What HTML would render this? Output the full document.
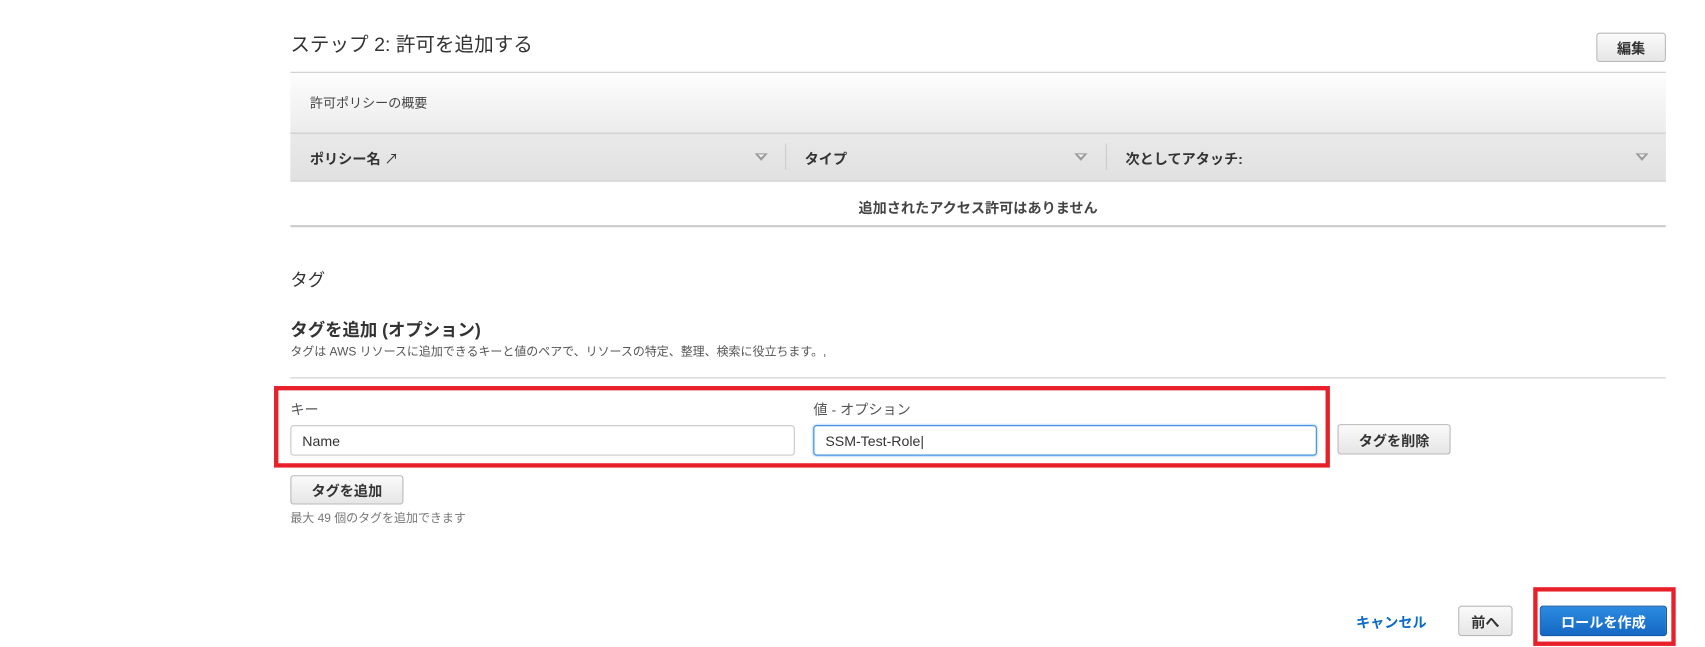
<!DOCTYPE html>
<html><head><meta charset="utf-8"><style>
*{box-sizing:border-box;margin:0;padding:0}
body{width:1705px;height:647px;background:#fff;position:relative;font-family:"Liberation Sans","Noto Sans CJK JP",sans-serif;color:#333;overflow:hidden}
#w{position:absolute;left:0;top:0;width:1568px;height:595px;transform:scale(1.0874);transform-origin:0 0}
.a{position:absolute}
.btn{position:absolute;border:1px solid #b8b8b8;border-radius:3px;background:linear-gradient(#fafafa,#e6e6e6);font-size:13px;font-weight:bold;color:#333;display:flex;align-items:center;justify-content:center}
.inp{position:absolute;border:1px solid #c8c8c8;border-radius:3px;background:#fff;font-size:13px;padding-left:10px;display:flex;align-items:center;color:#333}
.tri{position:absolute;width:0;height:0;border-left:6px solid transparent;border-right:6px solid transparent;border-top:7px solid #999}
.tri::after{content:"";position:absolute;left:-3px;top:-6px;border-left:3px solid transparent;border-right:3px solid transparent;border-top:3px solid #eee}
.sep{position:absolute;width:1px;height:24px;background:#ccc;top:132px}
</style></head><body><div id="w">
<div class="a" style="left:267px;top:27px;font-size:18px;color:#333">ステップ 2: 許可を追加する</div>
<div class="btn" style="left:1468px;top:30px;width:64px;height:27px">編集</div>
<div class="a" style="left:267px;top:66px;width:1265px;height:100px;border-top:1px solid #ccc;background:linear-gradient(#fdfdfd,#ececec 55%,#e9e9e9 56%,#e1e1e1)"></div>
<div class="a" style="left:267px;top:122px;width:1265px;height:1px;background:#ccc"></div>
<div class="a" style="left:267px;top:166px;width:1265px;height:1px;background:#ccc"></div>
<div class="a" style="left:285px;top:86px;font-size:12px;color:#444">許可ポリシーの概要</div>
<div class="a" style="left:285px;top:136px;font-size:13px;font-weight:bold;color:#333">ポリシー名 <span style="font-weight:normal">↗</span></div>
<div class="a" style="left:740px;top:136px;font-size:13px;font-weight:bold">タイプ</div>
<div class="a" style="left:1035px;top:136px;font-size:13px;font-weight:bold">次としてアタッチ:</div>
<div class="tri" style="left:694px;top:141px"></div>
<div class="tri" style="left:988px;top:141px"></div>
<div class="tri" style="left:1504px;top:141px"></div>
<div class="sep" style="left:722px"></div>
<div class="sep" style="left:1017px"></div>
<div class="a" style="left:267px;top:181px;width:1265px;text-align:center;font-size:13px;font-weight:bold;color:#444">追加されたアクセス許可はありません</div>
<div class="a" style="left:267px;top:207px;width:1265px;height:2px;background:#ccc"></div>
<div class="a" style="left:267px;top:244px;font-size:16px;color:#333">タグ</div>
<div class="a" style="left:267px;top:290px;font-size:16px;font-weight:bold;color:#333">タグを追加 (オプション)</div>
<div class="a" style="left:267px;top:315px;font-size:11px;color:#555">タグは AWS リソースに追加できるキーと値のペアで、リソースの特定、整理、検索に役立ちます。,</div>
<div class="a" style="left:267px;top:347px;width:1265px;height:1px;background:#ccc"></div>
<div class="a" style="left:252px;top:355px;width:971px;height:75px;border:4px solid #e8202a"></div>
<div class="a" style="left:267px;top:366px;font-size:13px;color:#555">キー</div>
<div class="a" style="left:748px;top:366px;font-size:13px;color:#555">値 - オプション</div>
<div class="inp" style="left:267px;top:391px;width:464px;height:28px">Name</div>
<div class="inp" style="left:748px;top:391px;width:463px;height:28px;border-color:#3b8fe0;box-shadow:0 0 2px #7ab3ec">SSM-Test-Role|</div>
<div class="btn" style="left:1230px;top:390px;width:104px;height:28px">タグを削除</div>
<div class="btn" style="left:267px;top:437px;width:104px;height:27px">タグを追加</div>
<div class="a" style="left:267px;top:468px;font-size:11px;color:#777">最大 49 個のタグを追加できます</div>
<div class="a" style="left:1247px;top:562px;font-size:13px;font-weight:bold;color:#0b6bc7">キャンセル</div>
<div class="btn" style="left:1341px;top:557px;width:50px;height:28px">前へ</div>
<div class="a" style="left:1410px;top:540px;width:131px;height:54px;border:4px solid #e8202a"></div>
<div class="btn" style="left:1416px;top:557px;width:117px;height:28px;background:linear-gradient(#2b8be0,#1568c4);border-color:#1458a8;color:#fff">ロールを作成</div>
</div></body></html>
